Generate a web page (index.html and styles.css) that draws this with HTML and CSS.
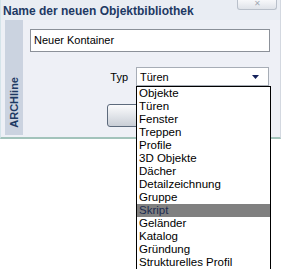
FILE: index.html
```html
<!DOCTYPE html>
<html>
<head>
  <title>Name der neuen Objektbibliothek</title>
  <link rel="stylesheet" href="styles.css">
</head>

<body>
  <div class="dialog">
    <div class="titlebar">
      <span class="title">Name der neuen Objektbibliothek</span>
      <div class="close-button">&#x2715;</div>
    </div>

    <div class="dialog-body">
      <div class="side-strip"><span>ARCHline</span></div>

      <div class="content">
        <div class="name-input">Neuer Kontainer</div>

        <div class="type-row">
          <span class="type-label">Typ</span>
          <div class="combo">
            <div class="combo-field">
              <span>Türen</span>
              <svg width="7" height="4" viewBox="0 0 7 4"><path d="M0 0h7L3.5 4z" fill="#14215a"/></svg>
            </div>
            <ul class="combo-list">
              <li>Objekte</li>
              <li>Türen</li>
              <li>Fenster</li>
              <li>Treppen</li>
              <li>Profile</li>
              <li>3D Objekte</li>
              <li>Dächer</li>
              <li>Detailzeichnung</li>
              <li>Gruppe</li>
              <li class="selected">Skript</li>
              <li>Geländer</li>
              <li>Katalog</li>
              <li>Gründung</li>
              <li>Strukturelles Profil</li>
            </ul>
          </div>
        </div>

        <div class="button-row">
          <div class="ok-button"></div>
        </div>
      </div>
    </div>
  </div>
</body>
</html>
```

FILE: styles.css
```css
html,
body {
  min-height: 269px;
}

body {
  margin: 0;
  background: #ffffff;
  font-family: "Liberation Sans", Arial, sans-serif;
}

.dialog {
  width: 279px;
  border-left: 1px solid #d4e4ea;
  border-right: 1px solid #d3d8e0;
  border-bottom: 2px solid #a2c3bb;
  background: #eef0f6;
}

.titlebar {
  display: flex;
  justify-content: space-between;
  align-items: flex-start;
  height: 20px;
  background: #e9edf3;
}

.title {
  margin: 4px 0 0 2px;
  font-size: 12px;
  font-weight: bold;
  color: #1d3963;
}

.close-button {
  width: 38px;
  height: 9px;
  margin-right: 3px;
  border: 1px solid #b9c0ca;
  border-top: none;
  border-radius: 0 0 3px 3px;
  background: linear-gradient(#f7f8fa, #dfe3e9);
  color: #a3aab4;
  font-size: 8px;
  line-height: 8px;
  text-align: center;
}

.dialog-body {
  display: flex;
  padding: 0 0 2px 4px;
}

.side-strip {
  display: flex;
  flex-direction: column;
  justify-content: flex-end;
  align-items: center;
  width: 18px;
  height: 115px;
  background: #cbd3e0;
}

.side-strip span {
  writing-mode: vertical-rl;
  transform: rotate(180deg);
  margin-bottom: 7px;
  font-size: 11px;
  font-weight: bold;
  color: #1d3963;
}

.content {
  flex: 1;
  padding: 9px 10px 0 7px;
  font-size: 11px;
}

.name-input {
  height: 21px;
  border: 1px solid #8c9199;
  background: #ffffff;
  padding-left: 3px;
  line-height: 21px;
  color: #000000;
}

.type-row {
  display: flex;
  justify-content: flex-end;
  align-items: center;
  gap: 8px;
  margin: 15px 1px 0 0;
}

.type-label {
  color: #000000;
}

.combo {
  position: relative;
  width: 133px;
}

.combo-field {
  display: flex;
  justify-content: space-between;
  align-items: center;
  height: 17px;
  padding: 0 9px 0 3px;
  border: 1px solid #a7adb6;
  background: #ffffff;
}

.combo-list {
  position: absolute;
  top: 100%;
  left: 0;
  z-index: 1;
  width: 133px;
  margin: 0;
  padding: 0;
  list-style: none;
  border: 1px solid #000000;
  background: #ffffff;
  font-size: 11.5px;
}

.combo-list li {
  height: 13px;
  padding-left: 2px;
  line-height: 13px;
  color: #000000;
}

.combo-list li.selected {
  background: #808080;
  color: #1c2b50;
}

.button-row {
  margin: 18px 0 0 77px;
}

.ok-button {
  width: 73px;
  height: 21px;
  border: 1px solid #5d6a7c;
  border-radius: 3px;
  background: linear-gradient(#fbfbfc, #e2e5ea 50%, #c9ced6);
}
```
